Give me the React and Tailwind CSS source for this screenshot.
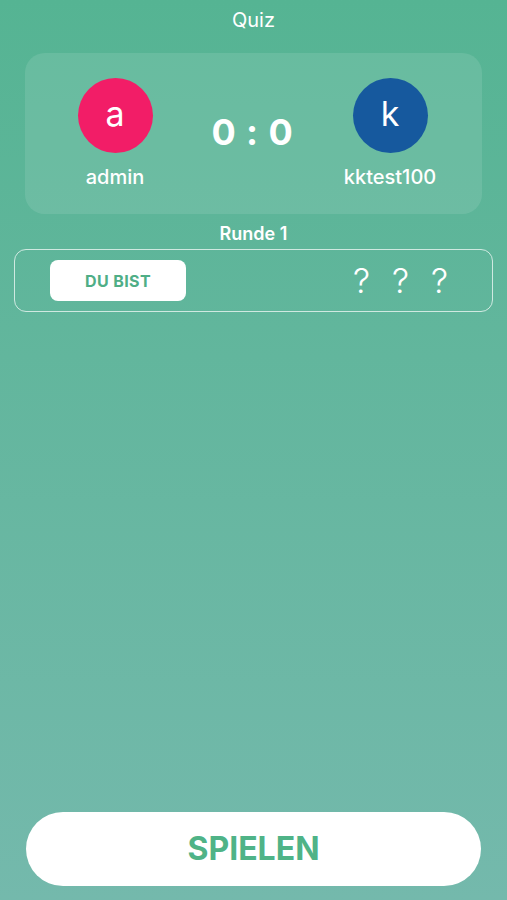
import React from 'react';

const players = [
  { id: 'me', name: 'admin', initial: 'a', color: 'bg-[#f21d67]' },
  { id: 'opp', name: 'kktest100', initial: 'k', color: 'bg-[#16599e]' },
];

function Player({ player }) {
  return (
    <div className="flex w-[130px] flex-col items-center">
      <div className={`flex h-[75px] w-[75px] items-center justify-center rounded-full ${player.color}`}>
        <span className="pb-1 text-[34px] leading-none text-white">{player.initial}</span>
      </div>
      <span className="mt-[11px] text-[20px] font-medium leading-[26px] text-white">{player.name}</span>
    </div>
  );
}

export default function App() {
  return (
    <div
      className="flex h-[900px] w-full flex-col bg-gradient-to-b from-[#55b493] to-[#74b9ac] px-[14px]"
      style={{ fontFamily: 'Inter, "Noto Sans", sans-serif' }}
    >
      <div className="pt-[7px] text-center text-[20px] leading-[26px] text-white">Quiz</div>

      {/* score card */}
      <div className="mx-[11px] mt-[20px] flex h-[161px] items-start justify-between rounded-[20px] bg-white/10 pl-[25px] pr-[27px] pt-[25px]">
        <Player player={players[0]} />
        <div className="mt-[36px] text-[36px] font-bold leading-none tracking-wide text-white">0 : 0</div>
        <Player player={players[1]} />
      </div>

      <div className="mt-[8px] text-center text-[18px] font-semibold leading-[24px] text-white">Runde 1</div>

      {/* round row */}
      <div className="mt-[3px] flex h-[63px] items-center rounded-[12px] border border-white/70 pl-[35px] pr-[44px]">
        <div className="flex h-[41px] w-[136px] items-center justify-center rounded-[8px] bg-white">
          <span className="text-[16px] font-bold tracking-wide text-[#4fae86]">DU BIST</span>
        </div>
        <div className="ml-auto flex gap-[22px] text-[34px] font-light leading-none text-white">
          <span>?</span>
          <span>?</span>
          <span>?</span>
        </div>
      </div>

      <div className="mt-auto px-[12px] pb-[14px]">
        <button className="flex h-[74px] w-full items-center justify-center rounded-full bg-white">
          <span className="text-[32px] font-bold text-[#4fb387]">SPIELEN</span>
        </button>
      </div>
    </div>
  );
}
